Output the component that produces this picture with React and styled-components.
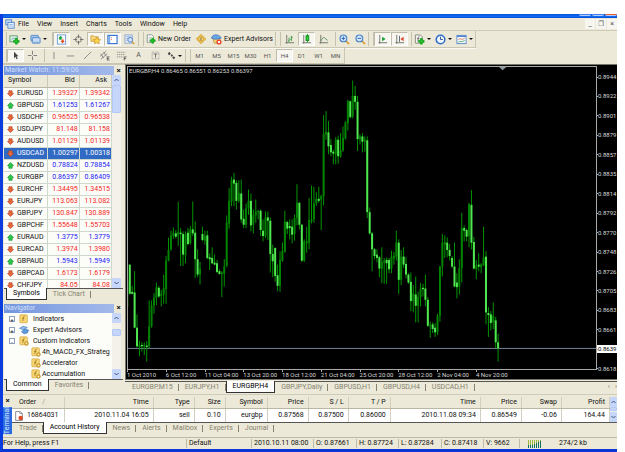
import styled, { createGlobalStyle, css } from "styled-components";

const GlobalStyle = createGlobalStyle`
  * {
    box-sizing: border-box;
  }

  body {
    margin: 0;
    background: #fff;
    color: #111;
    font-family: Roboto, "DejaVu Sans Condensed", sans-serif;
    font-size: 7px;
    line-height: 9px;
    overflow: hidden;
  }

  button {
    margin: 0;
    padding: 0;
    border: 0;
    background: none;
    color: inherit;
    font: inherit;
    white-space: nowrap;
  }
`;

/* ---------- data ---------- */

const MENU = ["File", "View", "Insert", "Charts", "Tools", "Window", "Help"];

const QUOTES = [
  ["EURUSD", "1.39327", "1.39342", 0],
  ["GBPUSD", "1.61253", "1.61267", 1],
  ["USDCHF", "0.96525", "0.96538", 0],
  ["USDJPY", "81.148", "81.158", 0],
  ["AUDUSD", "1.01129", "1.01139", 0],
  ["USDCAD", "1.00297", "1.00318", 0],
  ["NZDUSD", "0.78824", "0.78854", 1],
  ["EURGBP", "0.86397", "0.86409", 1],
  ["EURCHF", "1.34495", "1.34515", 0],
  ["EURJPY", "113.063", "113.082", 0],
  ["GBPJPY", "130.847", "130.889", 0],
  ["GBPCHF", "1.55648", "1.55703", 0],
  ["EURAUD", "1.3775", "1.3779", 1],
  ["EURCAD", "1.3974", "1.3980", 0],
  ["GBPAUD", "1.5943", "1.5949", 1],
  ["GBPCAD", "1.6173", "1.6179", 0],
  ["CHFJPY", "84.05", "84.08", 0],
];

const TREE = [
  { label: "Indicators", icon: "indicator", sign: "+" },
  { label: "Expert Advisors", icon: "expert", sign: "+" },
  { label: "Custom Indicators", icon: "custom", sign: "-" },
  { label: "4h_MACD_FX_Strateg", icon: "custom", child: true },
  { label: "Accelerator", icon: "custom", child: true },
  { label: "Accumulation", icon: "custom", child: true },
];

const TIMEFRAMES = ["M1", "M5", "M15", "M30", "H1", "H4", "D1", "W1", "MN"];

const PRICES = [
  "0.8944",
  "0.8922",
  "0.8901",
  "0.8879",
  "0.8857",
  "0.8835",
  "0.8814",
  "0.8792",
  "0.8770",
  "0.8748",
  "0.8726",
  "0.8705",
  "0.8683",
  "0.8661",
  "0.8639",
  "0.8618",
];

const TIMES = [
  "1 Oct 2010",
  "6 Oct 12:00",
  "11 Oct 04:00",
  "13 Oct 20:00",
  "18 Oct 12:00",
  "21 Oct 04:00",
  "25 Oct 20:00",
  "28 Oct 12:00",
  "2 Nov 04:00",
  "4 Nov 20:00",
];

const CHART_TABS = [
  "EURGBP,M15",
  "EURJPY,H1",
  "EURGBP,H4",
  "GBPJPY,Daily",
  "GBPUSD,H1",
  "GBPUSD,H4",
  "USDCAD,H1",
];

const TERMINAL_TABS = [
  "Trade",
  "Account History",
  "News",
  "Alerts",
  "Mailbox",
  "Experts",
  "Journal",
];

const ORDER_COLUMNS = [
  ["Order", 52, "16864031"],
  ["Time", 89, "2010.11.04 16:05"],
  ["Type", 41, "sell"],
  ["Size", 31, "0.10"],
  ["Symbol", 42, "eurgbp"],
  ["Price", 41, "0.87568"],
  ["S / L", 40, "0.87500"],
  ["T / P", 42, "0.86000"],
  ["Time", 90, "2010.11.08 09:34"],
  ["Price", 41, "0.86549"],
  ["Swap", 40, "-0.06"],
  ["Profit", 48, "164.44"],
];

const STATUS = [
  ["For Help, press F1", 184],
  ["Default", 65],
  ["2010.10.11 08:00", 62],
  ["O: 0.87661", 43],
  ["H: 0.87724", 42],
  ["L: 0.87284", 43],
  ["C: 0.87418", 42],
  ["V: 9662", 36],
];

// high, low, body top, body bottom, direction (1 up, 0 down)
const CANDLES = [
  [655, 742, 665, 742, 1], [616, 706, 616, 704, 0], [680, 706, 698, 704, 0],
  [636, 808, 700, 806, 0], [766, 866, 806, 862, 0], [845, 892, 858, 864, 1],
  [850, 878, 858, 862, 0], [850, 888, 858, 862, 1], [846, 908, 860, 864, 0],
  [724, 868, 802, 862, 1], [724, 806, 740, 802, 1], [702, 764, 716, 740, 1],
  [670, 738, 684, 716, 1], [680, 716, 686, 712, 0], [692, 742, 704, 710, 1],
  [646, 734, 688, 706, 1], [590, 734, 604, 690, 1], [535, 606, 572, 604, 1],
  [514, 574, 528, 570, 1], [504, 538, 520, 530, 1], [512, 538, 522, 532, 0],
  [427, 560, 518, 528, 1], [506, 620, 520, 524, 0], [516, 620, 524, 586, 0],
  [516, 612, 524, 588, 1], [506, 558, 520, 554, 0], [500, 556, 510, 552, 1],
  [426, 530, 510, 522, 0], [486, 656, 520, 600, 0], [570, 654, 600, 646, 0],
  [608, 676, 628, 646, 1], [502, 546, 524, 542, 0], [514, 556, 530, 544, 1],
  [514, 600, 528, 596, 0], [582, 632, 594, 600, 0], [564, 614, 596, 612, 0],
  [586, 618, 610, 616, 0], [602, 642, 612, 638, 0], [630, 646, 636, 644, 0],
  [636, 714, 640, 644, 1], [600, 682, 622, 644, 1], [468, 624, 490, 620, 1],
  [386, 508, 424, 492, 1], [352, 440, 362, 426, 1], [340, 440, 360, 372, 0],
  [362, 450, 370, 424, 0], [362, 430, 400, 424, 1], [360, 490, 402, 480, 0],
  [450, 506, 478, 496, 0], [432, 506, 446, 496, 1], [390, 466, 424, 446, 1],
  [402, 516, 424, 498, 0], [450, 522, 466, 496, 1], [420, 490, 456, 468, 1],
  [452, 480, 454, 458, 1], [450, 530, 454, 512, 0], [480, 546, 514, 530, 0],
  [456, 536, 474, 530, 1], [456, 542, 474, 484, 0], [474, 640, 484, 584, 0],
  [556, 654, 584, 606, 0], [564, 668, 566, 650, 0], [616, 696, 648, 680, 0],
  [576, 698, 602, 680, 1], [550, 608, 576, 604, 1], [454, 580, 486, 578, 1],
  [484, 524, 488, 508, 0], [480, 540, 500, 506, 0], [480, 552, 502, 526, 0],
  [466, 544, 476, 524, 1], [374, 498, 430, 476, 1], [428, 510, 430, 496, 0],
  [494, 608, 496, 604, 0], [540, 608, 546, 604, 1], [502, 580, 546, 552, 1],
  [416, 570, 482, 550, 1], [378, 492, 480, 486, 1], [382, 490, 432, 480, 1],
  [398, 440, 418, 432, 1], [382, 430, 418, 424, 0], [406, 512, 410, 420, 1],
  [166, 438, 222, 410, 1], [154, 240, 216, 224, 1], [184, 284, 218, 260, 0],
  [238, 290, 256, 278, 0], [270, 314, 276, 282, 0], [232, 314, 240, 284, 1],
  [228, 312, 240, 290, 0], [220, 294, 272, 290, 1], [200, 276, 234, 272, 1],
  [184, 240, 188, 236, 1], [120, 212, 124, 190, 1], [122, 176, 124, 172, 0],
  [62, 176, 108, 170, 1], [78, 150, 108, 126, 0], [108, 274, 126, 238, 0],
  [224, 254, 230, 240, 1], [220, 278, 230, 246, 0], [230, 276, 240, 246, 1],
  [230, 476, 242, 458, 0], [444, 526, 458, 522, 0], [518, 636, 522, 570, 0],
  [566, 600, 570, 590, 0], [570, 610, 586, 596, 0], [590, 654, 594, 628, 0],
  [564, 672, 608, 628, 1], [596, 674, 604, 610, 1], [594, 674, 602, 612, 0],
  [596, 642, 602, 630, 0], [574, 642, 592, 628, 1], [578, 616, 590, 598, 1],
  [514, 604, 550, 592, 1], [540, 704, 550, 662, 0], [572, 678, 592, 662, 1],
  [564, 626, 592, 616, 0], [594, 658, 614, 646, 0], [642, 674, 646, 670, 0],
  [640, 756, 668, 726, 0], [678, 760, 704, 726, 1], [652, 790, 706, 740, 0],
  [698, 790, 714, 740, 1], [672, 742, 688, 714, 1], [674, 712, 686, 690, 0],
  [646, 742, 688, 722, 0], [714, 804, 722, 800, 0], [788, 836, 798, 802, 1],
  [790, 822, 796, 810, 0], [792, 834, 806, 820, 0], [764, 828, 770, 820, 1],
  [620, 788, 622, 770, 1], [524, 652, 550, 622, 1], [528, 596, 548, 556, 1],
  [534, 594, 550, 572, 0], [554, 604, 572, 590, 0], [590, 626, 596, 622, 0],
  [550, 684, 622, 682, 0], [642, 718, 670, 684, 0], [600, 706, 626, 682, 1],
  [460, 670, 506, 626, 1], [498, 546, 506, 514, 0], [508, 546, 512, 532, 0],
  [430, 564, 434, 530, 1], [392, 570, 436, 550, 0], [532, 630, 548, 628, 0],
  [602, 660, 618, 630, 1], [582, 636, 616, 622, 0], [612, 642, 616, 624, 1],
  [502, 620, 594, 618, 1], [576, 796, 592, 760, 0], [744, 834, 762, 768, 0],
  [756, 814, 766, 792, 0], [730, 810, 770, 790, 1], [774, 868, 784, 850, 0],
  [824, 908, 850, 868, 0],
];

/* ---------- icons, all on a 12 x 12 grid ---------- */

const plus = (
  <path d="M7 5h2v2h2v2H9v2H7V9H5V7h2z" fill="#22c028" stroke="#14a01e" strokeWidth=".9" />
);

const axes = (
  <path d="M3 1v9.500M1.500 9.500H11" stroke="#6c7468" fill="none" />
);

const gearF = (
  <>
    <rect x="1" y="1" width="9" height="9.500" rx="1" fill="#f9d774" stroke="#c99a2c" strokeWidth=".7" />
    <path d="M7 2.800c-1.400-.5-1.700.6-1.900 2L4.600 8.500M3.800 5.200h2.700" stroke="#8a6412" strokeWidth=".8" fill="none" />
  </>
);

const ICONS = {
  app: (
    <>
      <rect x="1" y="1" width="7" height="6" fill="#cfe2fa" stroke="#3c78cc" />
      <rect x="3.500" y="4" width="7.500" height="7" fill="#f4f9ff" stroke="#3c78cc" />
      <path d="M5 6.500h4.500M5 8.500h4.500" stroke="#7ba8e0" />
    </>
  ),
  newChart: (
    <>
      <rect x="1" y="2" width="8" height="6.500" fill="#e4f2e4" stroke="#5f9a76" />
      <path d="M2.500 6.500l2-2 1.500 1 2-2" stroke="#3f8dbd" strokeWidth=".8" fill="none" />
      {plus}
    </>
  ),
  profiles: (
    <>
      <rect x="1" y="1.500" width="8" height="6" rx=".5" fill="#a6c8f0" stroke="#5285c4" />
      <rect x="2.500" y="4" width="8.500" height="6" rx=".5" fill="#c6dcf8" stroke="#5285c4" />
      <path d="M3 9h7.500" stroke="#7fa9da" />
    </>
  ),
  watch: (
    <>
      <rect x="1.500" y="1" width="9" height="10" fill="#fff" stroke="#6d9cd8" />
      <path d="M5 2l2.500 2.500H6v1.700H3.500V4.500H2.500z" fill="#18a23c" />
      <path d="M7.200 10L4.800 7.500h1.300V6h2.300v1.500h1.300z" fill="#e04a24" />
    </>
  ),
  target: (
    <>
      <circle cx="6" cy="6" r="3.200" fill="none" stroke="#6b6d68" />
      <path d="M6 .5v4M6 7.500v4M.5 6h4M7.500 6h4" stroke="#6b6d68" />
    </>
  ),
  folders: (
    <>
      <path d="M1 2h3l1 1h4v5H1z" fill="#fbdc7c" stroke="#c9962a" strokeWidth=".8" />
      <path d="M7.500 3.500l1.300 2.300 2.700.4-2 1.700.5 2.800-2.500-1.300L5 10.700l.5-2.800-2-1.700 2.700-.4z" fill="#ffd649" stroke="#c58d1c" strokeWidth=".7" />
    </>
  ),
  terminal: (
    <>
      <rect x="1" y="1.500" width="10" height="9" fill="#fff" stroke="#2e6fd2" strokeWidth="1.200" />
      <path d="M2.500 2v8" stroke="#7fa8e6" strokeWidth="2" />
      <path d="M4.500 4h1M4.500 6h1" stroke="#d94c3a" strokeWidth=".8" />
    </>
  ),
  tester: (
    <>
      <rect x="1" y="1" width="8" height="9" fill="#e9eff8" stroke="#8fa8cd" />
      <path d="M2.500 3h5M2.500 5h2M2.500 7h1.500" stroke="#90abd5" />
      <circle cx="6.800" cy="6.300" r="2.600" fill="#cfe4fb" stroke="#4d80c4" />
      <path d="M8.700 8.300l2.600 2.700" stroke="#d29a35" strokeWidth="1.500" />
    </>
  ),
  newOrder: (
    <>
      <path d="M1.500 1h5.500l2 2v7h-7.500z" fill="#fff" stroke="#7c8a80" />
      <path d="M3 4h4M3 6h3M3 8h2" stroke="#9aa89e" strokeWidth=".8" />
      {plus}
    </>
  ),
  warning: (
    <>
      <path d="M6 .5L11.500 6 6 11.500.5 6z" fill="#f8c94a" stroke="#c8921c" />
      <circle cx="6" cy="6" r="2.600" fill="#fff0b8" stroke="#b8841c" strokeWidth=".7" />
      <path d="M6 4v4" stroke="#7c5406" strokeWidth="1.200" />
    </>
  ),
  advisors: (
    <>
      <path d="M2 5l1.500 5h5.500l1-5z" fill="#f3cf74" stroke="#b88c2b" strokeWidth=".7" />
      <path d="M.5 4.500C1 1.500 4 .5 6.500 1S11 3 11 4.500C8 6 3 6 .5 4.500z" fill="#6ba6e6" stroke="#3469ad" strokeWidth=".7" />
      <circle cx="8.700" cy="8.700" r="2.800" fill="#e8452a" />
      <rect x="7.600" y="7.600" width="2.200" height="2.200" fill="#fff" />
    </>
  ),
  bars: (
    <>
      {axes}
      <path d="M5.500 4v4.500M4.500 7.500h1M8 2v5.500M8 3.500h1.500M7 6h1" stroke="#2f9442" fill="none" />
    </>
  ),
  candles: (
    <>
      {axes}
      <path d="M7 0v9" stroke="#0b8a16" />
      <rect x="5.500" y="2" width="3" height="5" fill="#2bd23c" stroke="#0b8a16" />
    </>
  ),
  line: (
    <>
      {axes}
      <path d="M3.500 7.500C5 3 7 3 8 5l2.500 2" stroke="#5c8f62" fill="none" />
    </>
  ),
  zoomIn: (
    <>
      <path d="M7.300 7.300l3.700 3.700" stroke="#d8a33c" strokeWidth="2" />
      <circle cx="4.800" cy="4.800" r="3.700" fill="#d6e8fc" stroke="#4b82cc" strokeWidth="1.200" />
      <path d="M4.800 2.800v4M2.800 4.800h4" stroke="#2460b4" />
    </>
  ),
  zoomOut: (
    <>
      <path d="M7.300 7.300l3.700 3.700" stroke="#d8a33c" strokeWidth="2" />
      <circle cx="4.800" cy="4.800" r="3.700" fill="#d6e8fc" stroke="#4b82cc" strokeWidth="1.200" />
      <path d="M2.800 4.800h4" stroke="#2460b4" />
    </>
  ),
  scroll: (
    <>
      {axes}
      <path d="M5.500 3l4 2.500-4 2.500z" fill="#1fa13a" />
    </>
  ),
  shift: (
    <>
      {axes}
      <path d="M6 2v6.500" stroke="#55616c" />
      <path d="M10.500 3v5L7 5.500z" fill="#d8452c" />
    </>
  ),
  indicators: (
    <>
      <path d="M1.500 1h5.500l2 2v7h-7.500z" fill="#f4f4f0" stroke="#84897f" />
      <path d="M6 2.800c-1-.4-1.300.4-1.400 1.500L4.200 8M3.300 5h2.500" stroke="#55594f" strokeWidth=".8" fill="none" />
      {plus}
    </>
  ),
  clock: (
    <>
      <circle cx="6" cy="6" r="4.700" fill="#f2f8ff" stroke="#2f6dc6" strokeWidth="1.700" />
      <path d="M6 3v3h2.500" stroke="#2c4f88" fill="none" />
    </>
  ),
  template: (
    <>
      <rect x="1" y="1.500" width="10" height="9" fill="#f5f9fe" stroke="#5b8ac6" />
      <path d="M1 2.500h10" stroke="#4f86d0" strokeWidth="1.500" />
      <path d="M2.500 6l2-1 2 1 3-1.500" stroke="#d0603c" strokeWidth=".8" fill="none" />
      <path d="M2.500 9l2-1 2 .5 3-1.500" stroke="#3f9a50" strokeWidth=".8" fill="none" />
    </>
  ),
  cursor: <path d="M4 1v8.500l2-2 1.500 3.500 1.500-.7L7.500 7H10z" fill="#444" />,
  cross: <path d="M6 1v4M6 7v4M1 6h4M7 6h4" stroke="#777" />,
  vline: <path d="M6.500 2v8" stroke="#888" />,
  hline: <path d="M2 6.500h8" stroke="#888" />,
  trend: <path d="M2 10l8-8" stroke="#888" />,
  channel: (
    <>
      <path d="M1 7l7-6M2 10l7-6M2 4l3 5M5 2l3 5" stroke="#777" strokeWidth=".8" />
      <path d="M11.500 7.500H9v3.500h2.500M9 9.200h2" stroke="#444" strokeWidth=".8" fill="none" />
    </>
  ),
  fibo: (
    <>
      <path d="M1 2.500h9M1 5h9M1 7.500h7" stroke="#888" strokeWidth=".9" strokeDasharray="1.500 .6" />
      <path d="M11.500 7.500H9v4M9 9.300h2" stroke="#444" strokeWidth=".8" fill="none" />
    </>
  ),
  label: (
    <>
      <rect x="1.500" y="1.500" width="9" height="9" fill="none" stroke="#888" strokeDasharray="1 .7" />
      <path d="M3.500 4h5M6 4v5" stroke="#666" strokeWidth="1.200" />
    </>
  ),
  arrows: (
    <path d="M3 1l2 2.500-2 2-2-2zM6.500 4L8 6 6.500 8 5 6zM9 7l2 2-2 2-2-2z" fill="#444" />
  ),
  indicator: gearF,
  custom: (
    <>
      {gearF}
      <circle cx="9" cy="9" r="2.200" fill="#f2c14c" stroke="#a97a1e" strokeWidth=".8" />
      <circle cx="9" cy="9" r=".7" fill="#fff" />
    </>
  ),
  expert: (
    <>
      <path d="M.5 4L5 1.500 10 3 6 6z" fill="#8cbcf0" stroke="#3e74b8" strokeWidth=".7" />
      <path d="M3 8l3.500-3L11.500 6 10 9.500 6 10.500z" fill="#5d9be0" stroke="#346aac" strokeWidth=".7" />
    </>
  ),
  order: (
    <>
      <path d="M2 .7h5.500L10 3v8.300H2z" fill="#fff" stroke="#777" />
      <path d="M7 .7V3h3" stroke="#777" fill="none" strokeWidth=".8" />
      <circle cx="8" cy="8.500" r="2.700" fill="#dd4a25" />
    </>
  ),
  up: (
    <path d="M6 .8L11.200 6 8.800 7.200V10.800H3.200V7.200L.8 6z" fill="#2fc44a" stroke="#118a28" />
  ),
  down: (
    <path d="M6 11.200L.8 6 3.200 4.800V1.200h5.600v3.600L11.200 6z" fill="#e4683c" stroke="#b0401c" />
  ),
};

const IconSvg = styled.svg`
  display: block;
  flex: none;
  width: ${({ $size }) => $size}px;
  height: ${({ $size }) => $size}px;
`;

function Icon({ name, size = 10 }) {
  return (
    <IconSvg viewBox="0 0 12 12" $size={size} aria-hidden="true">
      {ICONS[name]}
    </IconSvg>
  );
}

/* ---------- window frame ---------- */

const Window = styled.div`
  display: flex;
  flex-direction: column;
  height: calc(100vh - 14px);
  margin: 14px 8px 0 0;
  background: #ece9d8;
  border-left: 3px solid #0a3ce0;
  border-bottom: 3px solid #0a36d8;
  overflow: hidden;
`;

const TitleBar = styled.div`
  display: flex;
  justify-content: flex-end;
  gap: 1px;
  flex: none;
  height: 4px;
  background: linear-gradient(#0a50d8, #0f6cf4 60%, #0848d0);
`;

const Caption = styled.span`
  width: 12px;
  height: 2px;
  border-bottom: 1px solid #b4ccfa;
  border-radius: 0 0 2px 2px;
  background: ${({ $close }) => ($close ? "#e2572e" : "#3f7df0")};
`;

const MenuBar = styled.nav`
  display: flex;
  align-items: center;
  flex: none;
  height: 13px;
  padding-left: 2px;
  border-bottom: 1px solid #cfccba;
`;

const MenuItem = styled.button`
  padding: 0 3px;
  margin-right: 2px;
`;

const WindowButtons = styled.div`
  display: flex;
  gap: 1px;
  margin-left: auto;
`;

const WindowButton = styled.button`
  width: 10px;
  height: 10px;
  background: #f6f5ef;
  color: #555;
  line-height: 8px;
  overflow: hidden;
`;

const Toolbar = styled.div`
  display: flex;
  align-items: stretch;
  align-self: flex-start;
  flex: none;
  height: ${({ $height }) => $height}px;
  padding: 1px 0;
  border: solid #c9c6b4;
  border-width: 0 1px 1px 0;
  box-shadow: 0 1px #faf9f3;
`;

const Divider = styled.span`
  flex: none;
  width: ${({ $width }) => $width}px;
  border-left: 1px solid ${({ $width }) => ($width > 4 ? "#c5c2b0" : "transparent")};
  border-right: 1px solid #c5c2b0;
`;

const Tool = styled.button`
  display: flex;
  align-items: center;
  justify-content: center;
  gap: 2px;
  flex: none;
  width: ${({ $width = 17 }) => $width}px;
  color: ${({ $muted }) => ($muted ? "#555" : "#111")};
  ${({ $small }) =>
    $small &&
    css`
      font-size: 6px;
    `}
  ${({ $pressed }) =>
    $pressed &&
    css`
      background: #f7f6f0;
      border: 1px solid #c0bdab;
      border-right-color: #fff;
      border-bottom-color: #fff;
    `}
`;

const Caret = styled.span`
  border: solid transparent;
  border-width: 2px 2px 0;
  border-top-color: #111;
`;

function IconTool({ name, label, pressed, width, dropdown, size = 11 }) {
  return (
    <Tool aria-label={label} $pressed={pressed} $width={dropdown ? 21 : width}>
      <Icon name={name} size={size} />
      {dropdown && <Caret />}
    </Tool>
  );
}

function StandardToolbar() {
  return (
    <Toolbar $height={17}>
      <Divider $width={4} />
      <IconTool name="newChart" label="New chart" dropdown />
      <IconTool name="profiles" label="Profiles" dropdown />
      <Divider $width={4} />
      <IconTool name="watch" label="Market Watch" pressed />
      <IconTool name="target" label="Data window" />
      <IconTool name="folders" label="Navigator" pressed />
      <IconTool name="terminal" label="Terminal" pressed />
      <IconTool name="tester" label="Strategy Tester" />
      <Divider $width={6} />
      <Tool $width={49}>
        <Icon name="newOrder" />
        New Order
      </Tool>
      <IconTool name="warning" label="MetaEditor" width={16} size={10} />
      <Tool $width={66}>
        <Icon name="advisors" size={11} />
        Expert Advisors
      </Tool>
      <Divider $width={6} />
      <IconTool name="bars" label="Bar chart" />
      <IconTool name="candles" label="Candlesticks" pressed />
      <IconTool name="line" label="Line chart" />
      <Divider $width={4} />
      <IconTool name="zoomIn" label="Zoom in" width={16} />
      <IconTool name="zoomOut" label="Zoom out" width={16} />
      <Divider $width={6} />
      <IconTool name="scroll" label="Auto scroll" pressed />
      <IconTool name="shift" label="Chart shift" pressed />
      <Divider $width={4} />
      <IconTool name="indicators" label="Indicators" dropdown />
      <IconTool name="clock" label="Periods" dropdown />
      <IconTool name="template" label="Templates" dropdown />
    </Toolbar>
  );
}

function DrawingToolbar() {
  return (
    <Toolbar $height={16}>
      <Divider $width={4} />
      <IconTool name="cursor" label="Cursor" pressed size={9} />
      <IconTool name="cross" label="Crosshair" />
      <Divider $width={4} />
      <IconTool name="vline" label="Vertical line" />
      <IconTool name="hline" label="Horizontal line" />
      <IconTool name="trend" label="Trendline" />
      <IconTool name="channel" label="Channel" />
      <IconTool name="fibo" label="Fibonacci" />
      <Tool $muted>A</Tool>
      <IconTool name="label" label="Text label" size={9} />
      <IconTool name="arrows" label="Arrows" dropdown size={9} />
      <Divider $width={6} />
      {TIMEFRAMES.map((frame) => (
        <Tool key={frame} $small $muted $pressed={frame === "H4"}>
          {frame}
        </Tool>
      ))}
    </Toolbar>
  );
}

/* ---------- shared panel parts ---------- */

const Main = styled.main`
  display: flex;
  flex: 1;
  min-height: 0;
`;

const Sidebar = styled.aside`
  display: flex;
  flex-direction: column;
  flex: none;
  width: 122px;
  padding: 1px 2px 3px 1px;
  border-top: 1px solid #c9c6b4;
`;

const PanelHead = styled.header`
  display: flex;
  flex: none;
  height: 9px;
  color: #d5e0f8;
`;

const PanelTitle = styled.h2`
  flex: 1;
  margin: 0;
  padding-left: 1px;
  background: linear-gradient(90deg, #7396df, #a3b9ea);
  font-size: 7px;
  font-weight: 400;
  line-height: 9px;
`;

const CloseButton = styled.button`
  width: 9px;
  color: #111;
  font-size: 8px;
  font-weight: 700;
  line-height: 8px;
`;

const PanelBody = styled.div`
  display: flex;
  flex: ${({ $grow }) => ($grow ? "1" : "none")};
  height: ${({ $grow }) => ($grow ? "auto" : "66px")};
  min-height: 0;
  margin-right: 2px;
  background: #fcfcf8;
  overflow: hidden;
`;

const ScrollTrack = styled.div`
  display: flex;
  flex-direction: column;
  flex: none;
  width: ${({ $width }) => $width}px;
  background: #f3f1ea;
`;

const ScrollButton = styled.button`
  display: grid;
  place-items: center;
  flex: none;
  height: 10px;
  border-radius: 1px;
  background: #c6d6fa;
`;

const ScrollThumb = styled.span`
  flex: none;
  height: ${({ $height }) => $height}px;
  margin-top: ${({ $top }) => $top}px;
  margin-bottom: auto;
  border: 1px solid #b4c8f6;
  border-radius: 1px;
  background: #c6d6fa;
`;

const Chevron = styled.svg`
  display: block;
  width: 5px;
  height: 4px;
`;

function ScrollBar({ width = 9, thumb, top = 0 }) {
  return (
    <ScrollTrack $width={width}>
      <ScrollButton aria-label="Scroll up">
        <Chevron viewBox="0 0 5 4">
          <path d="M.5 3l2-2 2 2" stroke="#3f567e" fill="none" />
        </Chevron>
      </ScrollButton>
      <ScrollThumb $height={thumb} $top={top} />
      <ScrollButton aria-label="Scroll down">
        <Chevron viewBox="0 0 5 4">
          <path d="M.5 1l2 2 2-2" stroke="#3f567e" fill="none" />
        </Chevron>
      </ScrollButton>
    </ScrollTrack>
  );
}

const TabStrip = styled.div`
  display: flex;
  flex: none;
  height: 12px;
  padding-left: ${({ $indent = 2 }) => $indent}px;
  border-top: 1px solid #555;
`;

const Tab = styled.button`
  position: relative;
  padding: 0 ${({ $pad = 6 }) => $pad}px;
  color: #85826f;
  line-height: 11px;

  &::after {
    content: "";
    position: absolute;
    right: 0;
    top: 2px;
    height: 7px;
    border-right: 1px solid #85826f;
  }

  ${({ $active }) =>
    $active &&
    css`
      margin-top: -1px;
      background: #fff;
      border: 1px solid #333;
      border-top: 0;
      color: #000;

      &::after {
        display: none;
      }
    `}
`;

function Tabs({ items, active, indent, pad, children }) {
  return (
    <TabStrip $indent={indent} role="tablist">
      {items.map((item) => (
        <Tab key={item} role="tab" $active={item === active} $pad={pad}>
          {item}
        </Tab>
      ))}
      {children}
    </TabStrip>
  );
}

/* ---------- market watch ---------- */

const QuoteTable = styled.table`
  flex: 1;
  width: 100%;
  border-collapse: collapse;
  table-layout: fixed;
  align-self: flex-start;

  th {
    height: 12px;
    padding: 0 4px;
    background: #ebe9da;
    border-right: 1px solid #cbc8b6;
    border-bottom: 1px solid #b9b6a4;
    font-weight: 400;
    text-align: right;
  }

  th:first-child {
    width: 43px;
    text-align: left;
  }
`;

const QuoteRow = styled.tr`
  color: ${({ $up }) => ($up ? "#2222f4" : "#f2281e")};

  td {
    height: 12px;
    padding: 0 1px 0 0;
    border: solid #cfd8cc;
    border-width: 0 1px 1px 0;
    text-align: right;
  }

  ${({ $selected }) =>
    $selected &&
    css`
      background: #316ac5;
      color: #fff;
    `}
`;

const SymbolCell = styled.span`
  display: flex;
  align-items: center;
  gap: 3px;
  padding-left: 3px;
  color: ${({ $selected }) => ($selected ? "#fff" : "#111")};
`;

function MarketWatch() {
  return (
    <>
      <PanelHead>
        <PanelTitle>Market Watch: 11:59:06</PanelTitle>
        <CloseButton aria-label="Close Market Watch">×</CloseButton>
      </PanelHead>
      <PanelBody $grow>
        <QuoteTable>
          <thead>
            <tr>
              <th>Symbol</th>
              <th>Bid</th>
              <th>Ask</th>
            </tr>
          </thead>
          <tbody>
            {QUOTES.map(([symbol, bid, ask, up]) => (
              <QuoteRow key={symbol} $up={up} $selected={symbol === "USDCAD"}>
                <td>
                  <SymbolCell $selected={symbol === "USDCAD"}>
                    <Icon name={up ? "up" : "down"} size={7} />
                    {symbol}
                  </SymbolCell>
                </td>
                <td>{bid}</td>
                <td>{ask}</td>
              </QuoteRow>
            ))}
          </tbody>
        </QuoteTable>
        <ScrollBar thumb={28} />
      </PanelBody>
      <Tabs items={["Symbols", "Tick Chart"]} active="Symbols" />
    </>
  );
}

/* ---------- navigator ---------- */

const NavigatorBox = styled.section`
  flex: none;
  margin-top: 4px;
`;

const Tree = styled.ul`
  flex: 1;
  min-width: 0;
  margin: 0;
  padding: 1px 0 0;
  list-style: none;
  overflow: hidden;
`;

const TreeItem = styled.li`
  display: flex;
  align-items: center;
  gap: ${({ $child }) => ($child ? 1 : 4)}px;
  height: 11px;
  padding-left: ${({ $child }) => ($child ? 27 : 5)}px;
  white-space: nowrap;
`;

const Expander = styled.button`
  width: 6px;
  height: 6px;
  border: 1px solid #8d9fba;
  background: #fff;
  font-size: 6px;
  line-height: 3px;
`;

function Navigator() {
  return (
    <NavigatorBox>
      <PanelHead>
        <PanelTitle>Navigator</PanelTitle>
        <CloseButton aria-label="Close Navigator">×</CloseButton>
      </PanelHead>
      <PanelBody>
        <Tree>
          {TREE.map(({ label, icon, sign, child }) => (
            <TreeItem key={label} $child={child}>
              {sign && <Expander aria-label={`Toggle ${label}`}>{sign}</Expander>}
              <Icon name={icon} size={10} />
              {label}
            </TreeItem>
          ))}
        </Tree>
        <ScrollBar thumb={7} top={6} />
      </PanelBody>
      <Tabs items={["Common", "Favorites"]} active="Common" />
    </NavigatorBox>
  );
}

/* ---------- chart ---------- */

const ChartColumn = styled.section`
  display: flex;
  flex-direction: column;
  flex: 1;
  min-width: 0;
`;

const ChartWindow = styled.div`
  display: grid;
  grid-template-columns: minmax(0, 1fr) 20px;
  grid-template-rows: minmax(0, 1fr) 9px;
  flex: 1;
  min-height: 0;
  padding: 1px 0 0 1px;
  border: solid #77756a;
  border-width: 1px 0 1px 1px;
  background: #000;
  color: #d8d8d8;
  font-size: 6px;
  line-height: 8px;
  overflow: hidden;
`;

const Plot = styled.div`
  position: relative;
  min-height: 0;
  border: 1px solid #a8a8a4;
`;

const ChartTitle = styled.p`
  position: absolute;
  top: 0;
  left: 1px;
  margin: 0;
`;

const ChartSvg = styled.svg`
  display: block;
  width: 100%;
  height: 100%;
`;

const PriceAxis = styled.ol`
  display: flex;
  flex-direction: column;
  justify-content: space-between;
  margin: 7px 0 -3px;
  padding: 0;
  list-style: none;
`;

const Price = styled.li`
  display: flex;
  align-items: center;
  height: 8px;
  background: ${({ $current }) => ($current ? "#fff" : "none")};
  color: ${({ $current }) => ($current ? "#000" : "inherit")};

  &::before {
    content: "";
    flex: none;
    width: 1px;
    border-top: 1px solid #a8a8a4;
  }
`;

const TimeAxis = styled.ol`
  display: grid;
  grid-template-columns: repeat(10, 8.25%);
  margin: 0;
  padding: 0;
  list-style: none;
  white-space: nowrap;

  li {
    background: linear-gradient(#a8a8a4, #a8a8a4) 0 0 / 1px 2px no-repeat;
    line-height: 10px;
  }
`;

const ChartTabs = styled.div`
  flex: none;
  padding: 1px 0;
`;

const TabArrows = styled.span`
  display: flex;
  gap: 5px;
  margin-left: auto;
  color: #85826f;
`;

function Candle({ index, candle }) {
  const [high, low, top, bottom, up] = candle;
  const x = 7 + index * 7.27;
  return (
    <g>
      <path d={`M${x} ${high}V${low}`} stroke="#009600" strokeWidth="3" />
      <rect
        x={x - 3}
        y={top}
        width="6"
        height={Math.max(bottom - top, 4)}
        fill={up ? "#008400" : "#50e850"}
      />
    </g>
  );
}

function Chart() {
  return (
    <ChartColumn>
      <ChartWindow>
        <Plot>
          <ChartSvg viewBox="9 21 1404 909" preserveAspectRatio="none">
            <path d="M0 868.500H1420" stroke="#75839a" strokeWidth="3" />
            {CANDLES.map((candle, index) => (
              <Candle key={index} index={index} candle={candle} />
            ))}
            <path d="M1122 21h22l-11 10z" fill="#8b959c" />
          </ChartSvg>
          <ChartTitle>EURGBP,H4 0.86465 0.86551 0.86253 0.86397</ChartTitle>
        </Plot>
        <PriceAxis>
          {PRICES.map((price) => (
            <Price key={price} $current={price === "0.8639"}>
              {price}
            </Price>
          ))}
        </PriceAxis>
        <TimeAxis>
          {TIMES.map((time) => (
            <li key={time}>{time}</li>
          ))}
        </TimeAxis>
      </ChartWindow>
      <ChartTabs>
        <Tabs items={CHART_TABS} active="EURGBP,H4" indent={1} pad={6}>
          <TabArrows>
            <button aria-label="Previous tabs">‹</button>
            <button aria-label="Next tabs">›</button>
          </TabArrows>
        </Tabs>
      </ChartTabs>
    </ChartColumn>
  );
}

/* ---------- terminal ---------- */

const TerminalBox = styled.section`
  display: flex;
  flex: none;
  padding-top: 2px;
  border-top: 1px solid #cfccba;
`;

const TerminalSide = styled.div`
  display: flex;
  flex-direction: column;
  flex: none;
  width: 9px;
`;

const TerminalTitle = styled.h2`
  flex: 1;
  margin: 2px 0 0;
  background: #2a6ae0;
  color: #dfe9ff;
  font-size: 7px;
  font-weight: 400;
  line-height: 9px;
  text-align: center;
  writing-mode: vertical-rl;
  transform: rotate(180deg);
`;

const TerminalBody = styled.div`
  flex: 1;
  min-width: 0;
`;

const OrdersArea = styled.div`
  display: flex;
`;

const OrderTable = styled.table`
  flex: 1;
  min-width: 0;
  border-collapse: collapse;
  table-layout: fixed;
  white-space: nowrap;

  th,
  td {
    height: 13px;
    padding: 0 4px 0 0;
    border-right: 1px solid #d2cfbe;
    font-weight: 400;
    text-align: right;
  }

  th {
    height: 12px;
    border-bottom: 1px solid #b9b6a4;
  }

  th:first-child {
    padding-left: 7px;
    text-align: left;
  }

  td {
    background: #fff;
  }
`;

const OrderCell = styled.span`
  display: flex;
  align-items: center;
  gap: 3px;
  padding-left: 2px;
`;

const SortMark = styled.span`
  margin-left: 6px;
  color: #999;
`;

function Terminal() {
  return (
    <TerminalBox>
      <TerminalSide>
        <CloseButton aria-label="Close Terminal">×</CloseButton>
        <TerminalTitle>Terminal</TerminalTitle>
      </TerminalSide>
      <TerminalBody>
        <OrdersArea>
          <OrderTable>
            <colgroup>
              {ORDER_COLUMNS.map(([, width], index) => (
                <col key={index} width={width} />
              ))}
            </colgroup>
            <thead>
              <tr>
                {ORDER_COLUMNS.map(([name], index) => (
                  <th key={index}>
                    {name}
                    {index === 0 && <SortMark>/</SortMark>}
                  </th>
                ))}
              </tr>
            </thead>
            <tbody>
              <tr>
                {ORDER_COLUMNS.map(([, , value], index) => (
                  <td key={index}>
                    {index === 0 ? (
                      <OrderCell>
                        <Icon name="order" size={10} />
                        {value}
                      </OrderCell>
                    ) : (
                      value
                    )}
                  </td>
                ))}
              </tr>
            </tbody>
          </OrderTable>
          <ScrollBar width={7} thumb={4} />
        </OrdersArea>
        <Tabs items={TERMINAL_TABS} active="Account History" indent={1} />
      </TerminalBody>
    </TerminalBox>
  );
}

/* ---------- status bar ---------- */

const StatusBar = styled.footer`
  display: flex;
  align-items: center;
  flex: none;
  height: 12px;
  margin-top: 3px;
  border-top: 1px solid #bdbaa8;
  white-space: nowrap;
`;

const StatusCell = styled.span`
  flex: 0 1 ${({ $width }) => $width}px;
  padding-left: ${({ $first }) => ($first ? 0 : 2)}px;
  border-right: 1px solid #bdbaa8;
`;

const Traffic = styled.svg`
  flex: none;
  width: 14px;
  height: 8px;
  margin: 0 17px 0 8px;
`;

function Status() {
  return (
    <StatusBar>
      {STATUS.map(([text, width], index) => (
        <StatusCell key={text} $width={width} $first={index === 0}>
          {text}
        </StatusCell>
      ))}
      <Traffic viewBox="0 0 14 8" aria-hidden="true">
        <path d="M.5 0v5M2.500 0v5M4.500 0v5M6.500 0v4M8.500 0v3M10.500 0v2M12.500 0v1" stroke="#9ab83c" />
        <path d="M.5 5v3M2.500 5v3M4.500 5v3M6.500 4v4M8.500 3v5M10.500 2v6M12.500 1v7" stroke="#14705e" />
      </Traffic>
      274/2 kb
    </StatusBar>
  );
}

export default function App() {
  return (
    <>
      <GlobalStyle />
      <Window>
        <TitleBar>
          <Caption />
          <Caption />
          <Caption $close />
        </TitleBar>
        <MenuBar>
          <Icon name="app" size={10} />
          {MENU.map((item) => (
            <MenuItem key={item}>{item}</MenuItem>
          ))}
          <WindowButtons>
            <WindowButton aria-label="Minimize">_</WindowButton>
            <WindowButton aria-label="Restore">❐</WindowButton>
            <WindowButton aria-label="Close">×</WindowButton>
          </WindowButtons>
        </MenuBar>
        <StandardToolbar />
        <DrawingToolbar />
        <Main>
          <Sidebar>
            <MarketWatch />
            <Navigator />
          </Sidebar>
          <Chart />
        </Main>
        <Terminal />
        <Status />
      </Window>
    </>
  );
}
